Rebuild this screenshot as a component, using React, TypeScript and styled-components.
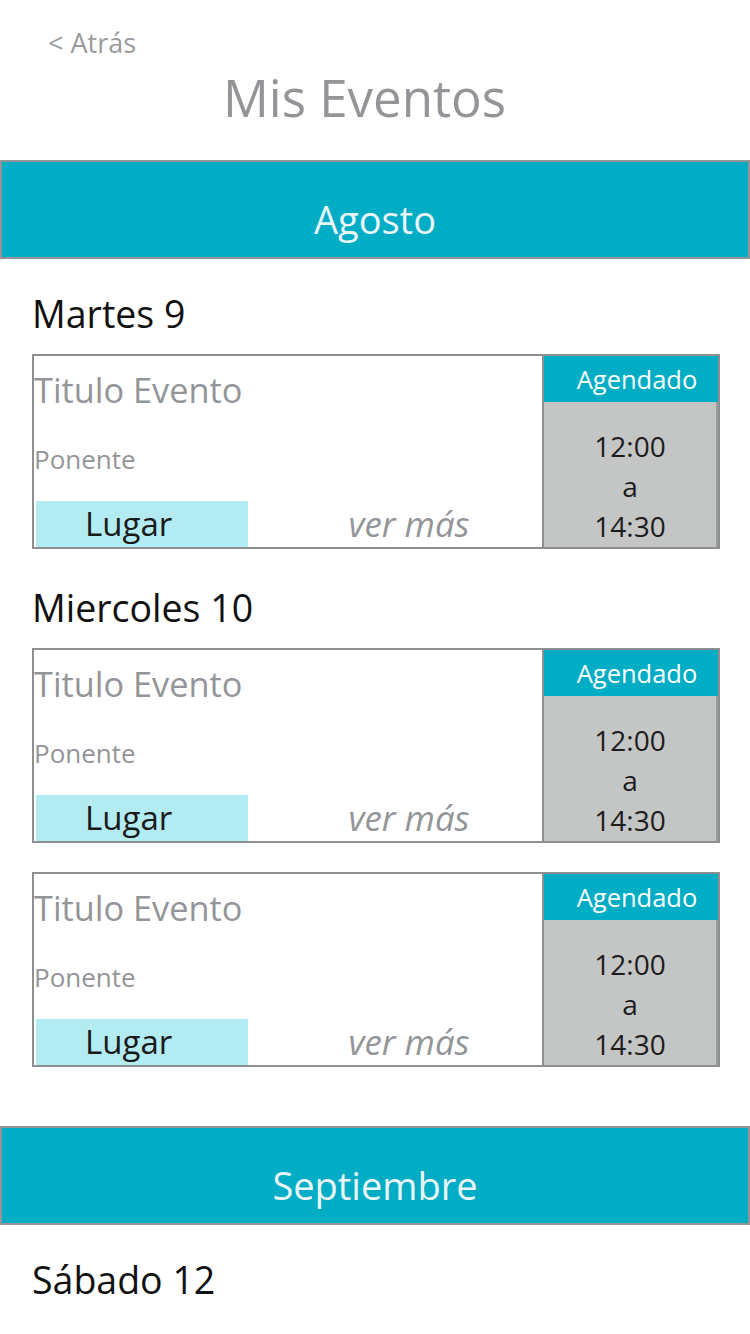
import React from "react";
import styled, { createGlobalStyle } from "styled-components";

const Global = createGlobalStyle`
  html, body { margin: 0; padding: 0; background: #ffffff; }
  body { font-family: "Open Sans", "Noto Sans", sans-serif; }
  * { box-sizing: border-box; }
`;

const Page = styled.div`
  width: 750px;
  min-height: 1334px;
  background: #ffffff;
  display: flex;
  flex-direction: column;
`;

const Header = styled.header`
  display: flex;
  flex-direction: column;
  padding-top: 28px;
`;

const Back = styled.a`
  padding-left: 48px;
  font-size: 27px;
  line-height: 30px;
  color: #9a9b9d;
  text-decoration: none;
`;

const Title = styled.h1`
  margin: 7px 0 0;
  padding-right: 21px;
  text-align: center;
  font-weight: 400;
  font-size: 51px;
  line-height: 64px;
  color: #939598;
`;

const MonthBar = styled.div<{ $top: number }>`
  margin-top: ${(p) => p.$top}px;
  height: 99px;
  border: 2px solid #949597;
  background: #00adc4;
  color: #e9f5f8;
  font-size: 38px;
  line-height: 38px;
  display: flex;
  align-items: center;
  justify-content: center;
  padding-top: 18px;
`;

const Section = styled.section`
  display: flex;
  flex-direction: column;
  padding: 0 30px 0 32px;
`;

const DayLabel = styled.h2<{ $top: number }>`
  margin: ${(p) => p.$top}px 0 18px 0;
  font-weight: 400;
  font-size: 37.5px;
  line-height: 44px;
  color: #111111;
`;

const Card = styled.article<{ $top?: number }>`
  margin-top: ${(p) => p.$top ?? 0}px;
  height: 195px;
  border: 2px solid #8e8f91;
  display: grid;
  grid-template-columns: 1fr 176px;
`;

const Info = styled.div`
  display: flex;
  flex-direction: column;
  padding-top: 14px;
`;

const EventTitle = styled.div`
  font-size: 34.3px;
  line-height: 40px;
  color: #939598;
`;

const Speaker = styled.div`
  margin-top: 34px;
  font-size: 26px;
  line-height: 30px;
  color: #939598;
`;

const BottomRow = styled.div`
  margin-top: auto;
  display: flex;
  align-items: flex-end;
`;

const Place = styled.div`
  margin-left: 2px;
  width: 212px;
  height: 46px;
  background: #b2ebf2;
  padding-left: 49px;
  font-size: 33px;
  line-height: 46px;
  color: #1a1a1a;
`;

const More = styled.a`
  flex: 1;
  text-align: center;
  padding-left: 28px;
  font-style: italic;
  font-size: 34.8px;
  line-height: 46px;
  color: #939598;
  text-decoration: none;
`;

const Side = styled.div`
  border-left: 2px solid #8e8f91;
  display: flex;
  flex-direction: column;
`;

const Status = styled.div`
  height: 46px;
  background: #00adc4;
  color: #ffffff;
  font-size: 25.5px;
  line-height: 46px;
  text-align: center;
  padding-left: 12px;
`;

const Times = styled.div`
  flex: 1;
  background: #c4c5c5;
  border-right: 2px solid #9c9d9f;
  padding-top: 24px;
  text-align: center;
  font-size: 28px;
  line-height: 40px;
  color: #1c1c1c;
  display: flex;
  flex-direction: column;
`;

type Ev = { top?: number };

const EventCard: React.FC<Ev> = ({ top }) => (
  <Card $top={top}>
    <Info>
      <EventTitle>Titulo Evento</EventTitle>
      <Speaker>Ponente</Speaker>
      <BottomRow>
        <Place>Lugar</Place>
        <More href="#">ver más</More>
      </BottomRow>
    </Info>
    <Side>
      <Status>Agendado</Status>
      <Times>
        <span>12:00</span>
        <span>a</span>
        <span>14:30</span>
      </Times>
    </Side>
  </Card>
);

export default function App() {
  return (
    <Page>
      <Global />
      <Header>
        <Back href="#">&lt; Atrás</Back>
        <Title>Mis Eventos</Title>
      </Header>
      <MonthBar $top={31}>Agosto</MonthBar>
      <Section>
        <DayLabel $top={33}>Martes 9</DayLabel>
        <EventCard />
        <DayLabel $top={37}>Miercoles 10</DayLabel>
        <EventCard />
        <EventCard top={29} />
      </Section>
      <MonthBar $top={59}>Septiembre</MonthBar>
      <Section>
        <DayLabel $top={33}>Sábado 12</DayLabel>
      </Section>
    </Page>
  );
}
